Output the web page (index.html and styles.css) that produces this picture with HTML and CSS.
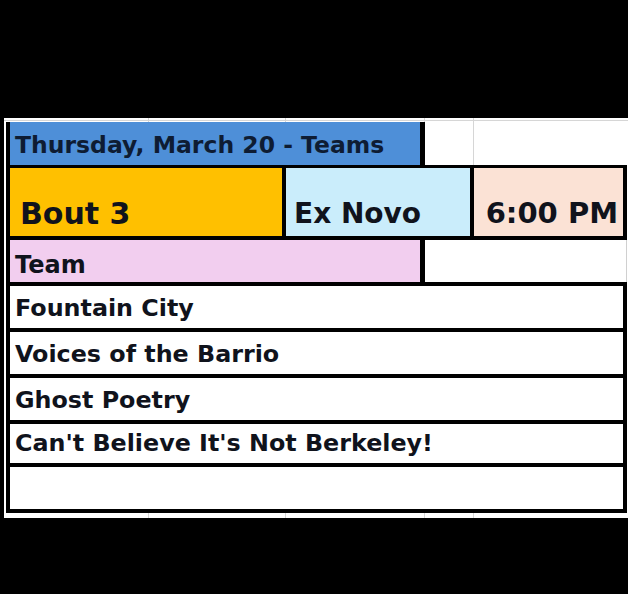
FILE: index.html
```html
<!DOCTYPE html>
<html>
<head>
<meta charset="utf-8">
<link rel="stylesheet" href="styles.css">
</head>
<body>
<div class="sheet">
  <div class="frame">
    <div class="row r1">
      <div class="cell title">Thursday, March 20 - Teams</div>
    </div>
    <div class="row r2">
      <div class="cell bout">Bout 3</div>
      <div class="cell venue">Ex Novo</div>
      <div class="cell time">6:00 PM</div>
    </div>
    <div class="row r3">
      <div class="cell team">Team</div>
      <div class="cell blank"></div>
    </div>
    <div class="row data">
      <div class="cell name">Fountain City</div>
    </div>
    <div class="row data">
      <div class="cell name">Voices of the Barrio</div>
    </div>
    <div class="row data">
      <div class="cell name">Ghost Poetry</div>
    </div>
    <div class="row data short">
      <div class="cell name">Can't Believe It's Not Berkeley!</div>
    </div>
    <div class="row data">
      <div class="cell name"></div>
    </div>
  </div>
</div>
</body>
</html>
```

FILE: styles.css
```css
html, body {
  margin: 0;
  padding: 0;
  background: #000;
}

body {
  width: 628px;
  height: 594px;
  overflow: hidden;
  font-family: "DejaVu Sans", "Open Sans", sans-serif;
  font-weight: 700;
  color: #10131c;
}

.sheet {
  margin: 118px 0 0 4px;
  width: 624px;
  height: 400px;
  box-sizing: border-box;
  padding: 4px 1px 5px 2px;
  background-color: #fff;
  background-image:
    linear-gradient(#d6d6d6, #d6d6d6),
    linear-gradient(#d6d6d6, #d6d6d6),
    linear-gradient(#d6d6d6, #d6d6d6),
    linear-gradient(#d6d6d6, #d6d6d6),
    linear-gradient(#d6d6d6, #d6d6d6);
  background-size: 1px 100%, 1px 100%, 1px 100%, 1px 100%, 100% 1px;
  background-position: 144px 0, 281px 0, 420px 0, 469px 0, 0 2px;
  background-repeat: no-repeat;
}

.frame {
  border-left: 4px solid #000;
}

.row {
  display: flex;
}

.cell {
  display: flex;
  align-items: flex-end;
  box-sizing: border-box;
  line-height: 1;
  white-space: nowrap;
  overflow: hidden;
}

/* row 1 */
.r1 {
  height: 43px;
}
.title {
  width: 415px;
  background: #4e8fd8;
  border-right: 5px solid #000;
  padding: 0 0 8px 5px;
  font-size: 23.5px;
  color: #0e1c33;
}

/* row 2 */
.r2 {
  height: 68px;
  border-top: 3px solid #000;
  border-bottom: 4px solid #000;
}
.bout {
  width: 276px;
  background: #ffc000;
  border-right: 4px solid #000;
  font-size: 30px;
  padding: 0 0 7px 10px;
}
.venue {
  width: 188px;
  background: #caedfb;
  border-right: 4px solid #000;
  font-size: 28px;
  padding: 0 0 8px 8px;
}
.time {
  width: 153px;
  background: #fbe2d5;
  border-right: 4px solid #000;
  font-size: 29px;
  justify-content: flex-end;
  padding: 0 5px 8px 0;
}

/* row 3 */
.r3 {
  height: 42px;
  border-bottom: 4px solid #000;
}
.team {
  width: 415px;
  background: #f2ceef;
  border-right: 5px solid #000;
  font-size: 24px;
  padding: 0 0 5px 5px;
}
.blank {
  flex: 1;
  background: #fff;
  border-right: 1px solid #d0d0d0;
}

/* data rows */
.data {
  height: 42px;
  border-bottom: 4px solid #000;
  width: 617px;
  background: #fff;
}
.data.short {
  height: 39px;
}
.name {
  flex: 1;
  border-right: 4px solid #000;
  font-size: 23.8px;
  padding: 0 0 7px 5px;
}
```
